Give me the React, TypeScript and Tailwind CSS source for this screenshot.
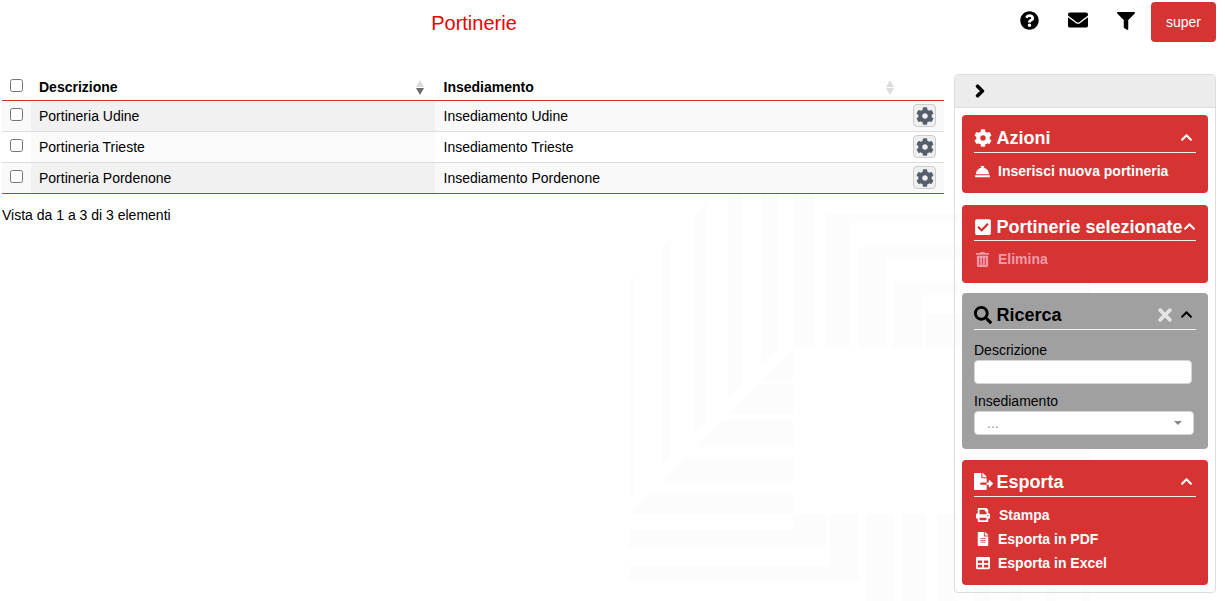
import React from "react";
import {
  FaQuestionCircle,
  FaEnvelope,
  FaFilter,
  FaChevronRight,
  FaChevronUp,
  FaCog,
  FaConciergeBell,
  FaCheckSquare,
  FaTrashAlt,
  FaSearch,
  FaTimes,
  FaFileExport,
  FaPrint,
  FaFileAlt,
  FaTable,
} from "react-icons/fa";

const polys = [
  "629,281 634,276 634,492 629,497",
  "662,247 670,239 670,456 662,464",
  "695,215 706,203 706,421 695,432",
  "728,182 742,168 742,384 728,398",
  "761,150 778,132 778,347 761,365",
  "793,120 814,120 814,347 793,347",
  "793,348 793,381 761,381",
  "758,384 793,384 793,414 728,414",
  "722,420 793,420 793,447 696,447",
  "687,457 793,457 793,481 663,481",
  "650,493 793,493 793,514 629,514",
  "629,530 793,530 793,514 826,514 826,547 629,547",
  "629,566 830,566 830,514 859,514 859,581 629,581",
  "866,514 893,514 893,601 866,601",
  "902,514 926,514 926,601 902,601",
  "937,514 957,514 957,601 937,601",
  "974,514 991,514 991,601 974,601",
  "1010,514 1023,514 1023,601 1010,601",
  "1047,514 1056,514 1056,601 1047,601",
  "1083,514 1090,514 1090,601 1083,601",
  "826,214 1090,214 1090,223 850,223 850,347 826,347",
  "859,247 1090,247 1090,259 886,259 886,347 859,347",
  "893,281 1090,281 1090,295 922,295 922,347 893,347",
  "926,314 1090,314 1090,347 926,347",
  "960,380 1090,380 1090,403 960,403",
  "960,413 1090,413 1090,440 960,440",
  "960,447 1090,447 1090,473 960,473",
  "960,480 1090,480 1090,505 960,505",
];

function Watermark() {
  return (
    <svg
      className="absolute left-0 top-0 w-[1225px] h-[601px] pointer-events-none"
      viewBox="0 0 1225 601"
    >
      {polys.map((p) => (
        <polygon key={p} points={p} fill="#fcfcfc" />
      ))}
    </svg>
  );
}

function SortArrows({ dark }: { dark?: boolean }) {
  return (
    <svg width="8" height="15" viewBox="0 0 8 15" className="block">
      <polygon points="4,0 8,7 0,7" fill="#dcdcdc" />
      <polygon points="0,8 8,8 4,15" fill={dark ? "#6b6b6b" : "#dcdcdc"} />
    </svg>
  );
}

function Check() {
  return (
    <input
      type="checkbox"
      className="block w-[13px] h-[13px] m-0 appearance-none bg-white border border-[#767676] rounded-[2.5px]"
    />
  );
}

const rows: [string, string][] = [
  ["Portineria Udine", "Insediamento Udine"],
  ["Portineria Trieste", "Insediamento Trieste"],
  ["Portineria Pordenone", "Insediamento Pordenone"],
];

function DataTable() {
  return (
    <table className="table-fixed w-[942px] ml-[2px] border-separate border-spacing-0 text-[14px] text-black">
      <colgroup>
        <col className="w-[29px]" />
        <col className="w-[404px]" />
        <col className="w-[470px]" />
        <col className="w-[39px]" />
      </colgroup>
      <thead>
        <tr className="h-[27px]">
          <th className="pl-[8px] align-middle p-0 border-b border-[#d63333]">
            <div className="-mt-[3px]">
              <Check />
            </div>
          </th>
          <th className="text-left font-bold pl-[8px] align-middle p-0 border-b border-[#d63333]">
            <div className="flex items-center justify-between pr-[11px]">
              <span>Descrizione</span>
              <SortArrows dark />
            </div>
          </th>
          <th className="text-left font-bold pl-[8.5px] align-middle p-0 border-b border-[#d63333]">
            <div className="flex items-center justify-between pr-[11px]">
              <span>Insediamento</span>
              <SortArrows />
            </div>
          </th>
          <th className="p-0 border-b border-[#d63333]" />
        </tr>
      </thead>
      <tbody>
        {rows.map(([a, b], i) => {
          const line = i === 2 ? "border-[#d63333]" : "border-[#dddddd]";
          const bg = i % 2 === 0 ? "bg-[#f9f9f9]" : "bg-white";
          const sortedBg = i % 2 === 0 ? "bg-[#f1f1f1]" : "bg-[#fafafa]";
          return (
            <tr key={a} className="h-[31px]">
              <td className={`pl-[8px] p-0 align-middle border-b ${line} ${bg}`}>
                <div className="-mt-[3px]">
                  <Check />
                </div>
              </td>
              <td className={`pl-[8px] p-0 align-middle border-b ${line} ${sortedBg}`}>{a}</td>
              <td className={`pl-[8.5px] p-0 align-middle border-b ${line} ${bg}`}>{b}</td>
              <td className={`p-0 align-middle border-b ${line} ${bg}`}>
                <button className="ml-[8px] -mt-[1px] w-[23px] h-[23px] flex items-center justify-center bg-[#efefef] border border-[#cccccc] rounded-[4px] text-[#555e6b]">
                  <FaCog size={18} />
                </button>
              </td>
            </tr>
          );
        })}
      </tbody>
    </table>
  );
}

function CardTitle({
  icon,
  title,
  dark,
  extra,
  spaceClass,
}: {
  icon: React.ReactNode;
  title: string;
  dark?: boolean;
  extra?: React.ReactNode;
  spaceClass?: string;
}) {
  return (
    <div
      className={
        "border-b border-[#f2f2f2] font-bold text-[18px] leading-none " +
        (dark ? "text-black " : "text-white ") +
        (spaceClass ?? "")
      }
    >
      <div className="flex items-center h-[25px]">
        <span className="w-[22.5px] shrink-0 flex items-center">{icon}</span>
        <span className="whitespace-nowrap">{title}</span>
        <span className="ml-auto flex items-center gap-[5px] pr-[3px]">
          {extra}
          <FaChevronUp size={13} />
        </span>
      </div>
    </div>
  );
}

function Item({
  icon,
  label,
  faded,
  labelClass,
}: {
  icon: React.ReactNode;
  label: string;
  faded?: boolean;
  labelClass?: string;
}) {
  return (
    <div
      className={
        "flex items-center h-[24px] font-bold text-[14px] " +
        (faded ? "text-[#f19aa9]" : "text-white")
      }
    >
      <span className="w-[24px] shrink-0 flex items-center justify-center pr-[7px]">
        {icon}
      </span>
      <span className={"whitespace-nowrap " + (labelClass ?? "")}>{label}</span>
    </div>
  );
}

function SidePanel() {
  return (
    <aside className="w-[262px] h-[519px] shrink-0 border border-[#dddddd] rounded-[4px] relative">
      <div className="h-[33px] bg-[#ececec] border-b border-[#dddddd] rounded-t-[4px] flex items-center pl-[18px] text-black">
        <FaChevronRight size={14} className="stroke-[50]" />
      </div>
      <div className="px-[7px] pt-[7px] flex flex-col">
        <section className="h-[78px] bg-[#d63333] rounded-[4px] px-[12px] pt-[10px]">
          <CardTitle icon={<FaCog size={18} />} title="Azioni" spaceClass="pb-[2px]" />
          <div className="pt-[6px]">
            <Item icon={<FaConciergeBell size={15} />} label="Inserisci nuova portineria" />
          </div>
        </section>
        <section className="mt-[12px] h-[78px] bg-[#d63333] rounded-[4px] px-[12px] pt-[9px]">
          <CardTitle icon={<FaCheckSquare size={18} />} title="Portinerie selezionate" spaceClass="pb-[1px]" />
          <div className="pt-[6px]">
            <Item icon={<FaTrashAlt size={15} />} label="Elimina" faded />
          </div>
        </section>
        <section className="mt-[10px] h-[156px] bg-[#a0a0a0] rounded-[4px] px-[12px] pt-[9px]">
          <CardTitle
            icon={<FaSearch size={18} />}
            title="Ricerca"
            dark
            spaceClass="pb-[2px]"
            extra={<FaTimes size={20} className="text-[#e4e4e4]" />}
          />
          <label className="block mt-[11px] text-[14px] leading-[18px] text-black">
            Descrizione
          </label>
          <div className="w-[218px] h-[24px] mt-[1px] bg-white border border-[#d5d5d5] rounded-[4px]" />
          <label className="block mt-[8px] text-[14px] leading-[18px] text-black">
            Insediamento
          </label>
          <div className="w-[220px] h-[24px] mt-[1px] bg-white border border-[#d5d5d5] rounded-[4px] flex items-center justify-between pl-[12px] pr-[11px] text-[#999999] text-[14px]">
            <span className="pt-[1px]">...</span>
            <svg width="8" height="4" viewBox="0 0 8 4">
              <polygon points="0,0 8,0 4,4" fill="#888888" />
            </svg>
          </div>
        </section>
        <section className="mt-[11px] h-[125px] bg-[#d63333] rounded-[4px] px-[12px] pt-[9px]">
          <CardTitle icon={<FaFileExport size={19} />} title="Esporta" spaceClass="pb-[2px]" />
          <div className="pt-[6px]">
            <Item icon={<FaPrint size={14} />} label="Stampa" labelClass="ml-[1px]" />
            <Item icon={<FaFileAlt size={14} />} label="Esporta in PDF" />
            <Item icon={<FaTable size={14} />} label="Esporta in Excel" />
          </div>
        </section>
      </div>
    </aside>
  );
}

export default function App() {
  return (
    <div className="relative w-[1225px] h-[601px] overflow-hidden bg-white font-['Liberation_Sans',Arial,sans-serif]">
      <Watermark />
      <div className="relative">
        <header className="flex h-[74px] items-start">
          <div className="w-[948px] pt-[10px] text-center text-[20px] leading-[26px] text-[#f00000]">
            Portinerie
          </div>
          <div className="flex-1 flex justify-end pr-[9px] pt-[2px] text-black">
            <div className="flex items-center h-[40px] gap-[29px] -mt-[2px]">
              <FaQuestionCircle size={19} />
              <FaEnvelope size={20} />
              <FaFilter size={18} className="mt-[1px]" />
            </div>
            <button className="ml-[16.5px] w-[65px] h-[40px] bg-[#d63333] text-white text-[14px] rounded-[4px]">
              super
            </button>
          </div>
        </header>
        <div className="flex items-start">
          <main className="w-[954px] shrink-0">
            <DataTable />
            <p className="ml-[2px] mt-[13px] text-[14px] leading-[16px] text-black">
              Vista da 1 a 3 di 3 elementi
            </p>
          </main>
          <SidePanel />
        </div>
      </div>
    </div>
  );
}
